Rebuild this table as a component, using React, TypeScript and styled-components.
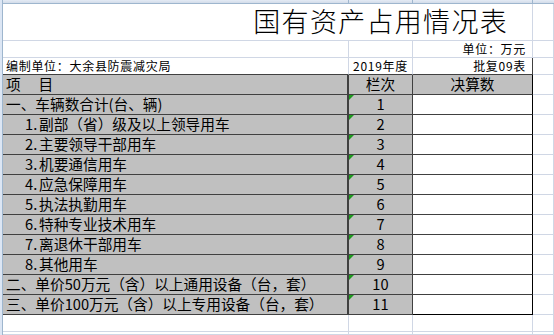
import styled, { createGlobalStyle } from "styled-components";

const GRID = "#d0d7e5";
const LINE = "#404040";
const FILL = "#c0c0c0";
const COLS = "346px 64px 120px 1fr";

const GlobalStyle = createGlobalStyle`
  html, body {
    margin: 0;
    padding: 0;
    background: #fff;
  }
  body {
    font-family: "Noto Sans CJK SC", "Noto Sans", sans-serif;
    color: #000;
    overflow: hidden;
  }
`;

const Page = styled.div`
  width: 554px;
  height: 335px;
  display: flex;
  overflow: hidden;
`;

const RowHeaderEdge = styled.div`
  flex: none;
  width: 2px;
  background: #dce6f4;
  border-right: 1px solid #9eb6ce;
`;

const Main = styled.div`
  flex: 1;
  display: flex;
  flex-direction: column;
`;

const ColumnHeader = styled.div`
  flex: none;
  height: 3px;
  display: grid;
  grid-template-columns: ${COLS};
  background: linear-gradient(#e4ebf5, #d3dce9);
  border-bottom: 1px solid #9eb6ce;
`;

const HeadTick = styled.div`
  box-sizing: border-box;
  border-right: 1px solid #9eb6ce;
`;

const Sheet = styled.div`
  flex: 1;
  display: grid;
  grid-template-columns: ${COLS};
  grid-template-rows: 37px 17px 17px 20px repeat(11, 20px) 17px 1fr;
`;

type CellProps = {
  $fill?: boolean;
  $bottom?: string;
  $right?: string;
  $rightWidth?: number;
  $align?: "flex-start" | "center" | "flex-end";
  $pad?: number;
  $size?: number;
  $span?: number;
};

const Cell = styled.div<CellProps>`
  position: relative;
  box-sizing: border-box;
  min-width: 0;
  display: flex;
  align-items: center;
  justify-content: ${(p) => p.$align ?? "flex-start"};
  padding: 0 ${(p) => (p.$align === "flex-end" ? p.$pad ?? 0 : 0)}px 0
    ${(p) => (p.$align === "flex-end" ? 0 : p.$pad ?? 0)}px;
  grid-column: span ${(p) => p.$span ?? 1};
  background: ${(p) => (p.$fill ? FILL : "#fff")};
  border-right: ${(p) => p.$rightWidth ?? 1}px solid ${(p) => p.$right ?? GRID};
  border-bottom: 1px solid ${(p) => p.$bottom ?? GRID};
  font-size: ${(p) => p.$size ?? 14.67}px;
  line-height: 1;
  white-space: pre;
`;

const TitleCell = styled(Cell)`
  align-items: flex-end;
  font-size: 27px;
  font-weight: 300;
  letter-spacing: 1.3px;
  line-height: normal;
`;

// the small 10pt notes above the table
const NoteCell = styled(Cell)`
  font-size: 12px;
  letter-spacing: 0.7px;
`;

// numbers stored as text: Excel's little green flag in the corner
const IndexCell = styled(Cell)`
  &::before {
    content: "";
    position: absolute;
    top: 0;
    left: 0;
    border-top: 5px solid #1f9a1f;
    border-right: 5px solid transparent;
  }
`;

const ItemNo = styled.span`
  display: inline-block;
  width: 14px;
`;

const rows: { no?: string; label: string }[] = [
  { label: "一、车辆数合计(台、辆)" },
  { no: "1.", label: "副部（省）级及以上领导用车" },
  { no: "2.", label: "主要领导干部用车" },
  { no: "3.", label: "机要通信用车" },
  { no: "4.", label: "应急保障用车" },
  { no: "5.", label: "执法执勤用车" },
  { no: "6.", label: "特种专业技术用车" },
  { no: "7.", label: "离退休干部用车" },
  { no: "8.", label: "其他用车" },
  { label: "二、单价50万元（含）以上通用设备（台，套）" },
  { label: "三、单价100万元（含）以上专用设备（台，套）" },
];

export default function App() {
  return (
    <Page>
      <GlobalStyle />
      <RowHeaderEdge />
      <Main>
        <ColumnHeader>
          <HeadTick />
          <HeadTick />
          <HeadTick />
          <div />
        </ColumnHeader>
        <Sheet>
          <TitleCell $span={3} $align="flex-end" $pad={24}>
            国有资产占用情况表
          </TitleCell>
          <Cell />

          <Cell />
          <Cell />
          <NoteCell $align="flex-end" $pad={6}>
            单位：万元
          </NoteCell>
          <Cell />

          <NoteCell $pad={3} $bottom={LINE}>
            编制单位：大余县防震减灾局
          </NoteCell>
          <NoteCell $align="center" $bottom={LINE}>
            2019年度
          </NoteCell>
          <NoteCell $align="flex-end" $pad={6} $bottom={LINE} $right={LINE}>
            批复09表
          </NoteCell>
          <Cell />

          <Cell $fill $pad={3} $bottom={LINE} $right={LINE} $rightWidth={2}>
            项　 目
          </Cell>
          <Cell $fill $align="center" $bottom={LINE} $right={LINE}>
            栏次
          </Cell>
          <Cell $fill $align="center" $bottom={LINE} $right="#000">
            决算数
          </Cell>
          <Cell />

          {rows.map((r, i) => [
            <Cell
              key={`a${i}`}
              $fill
              $pad={r.no ? 22 : 3}
              $bottom={LINE}
              $right={LINE}
              $rightWidth={2}
            >
              {r.no && <ItemNo>{r.no}</ItemNo>}
              {r.label}
            </Cell>,
            <IndexCell key={`b${i}`} $fill $align="center" $bottom={LINE} $right={LINE}>
              {i + 1}
            </IndexCell>,
            <Cell key={`c${i}`} $bottom={i === rows.length - 1 ? "#000" : LINE} $right="#000" />,
            <Cell key={`d${i}`} />,
          ])}

          <Cell />
          <Cell />
          <Cell />
          <Cell />

          <Cell />
          <Cell />
          <Cell />
          <Cell />
        </Sheet>
      </Main>
    </Page>
  );
}
